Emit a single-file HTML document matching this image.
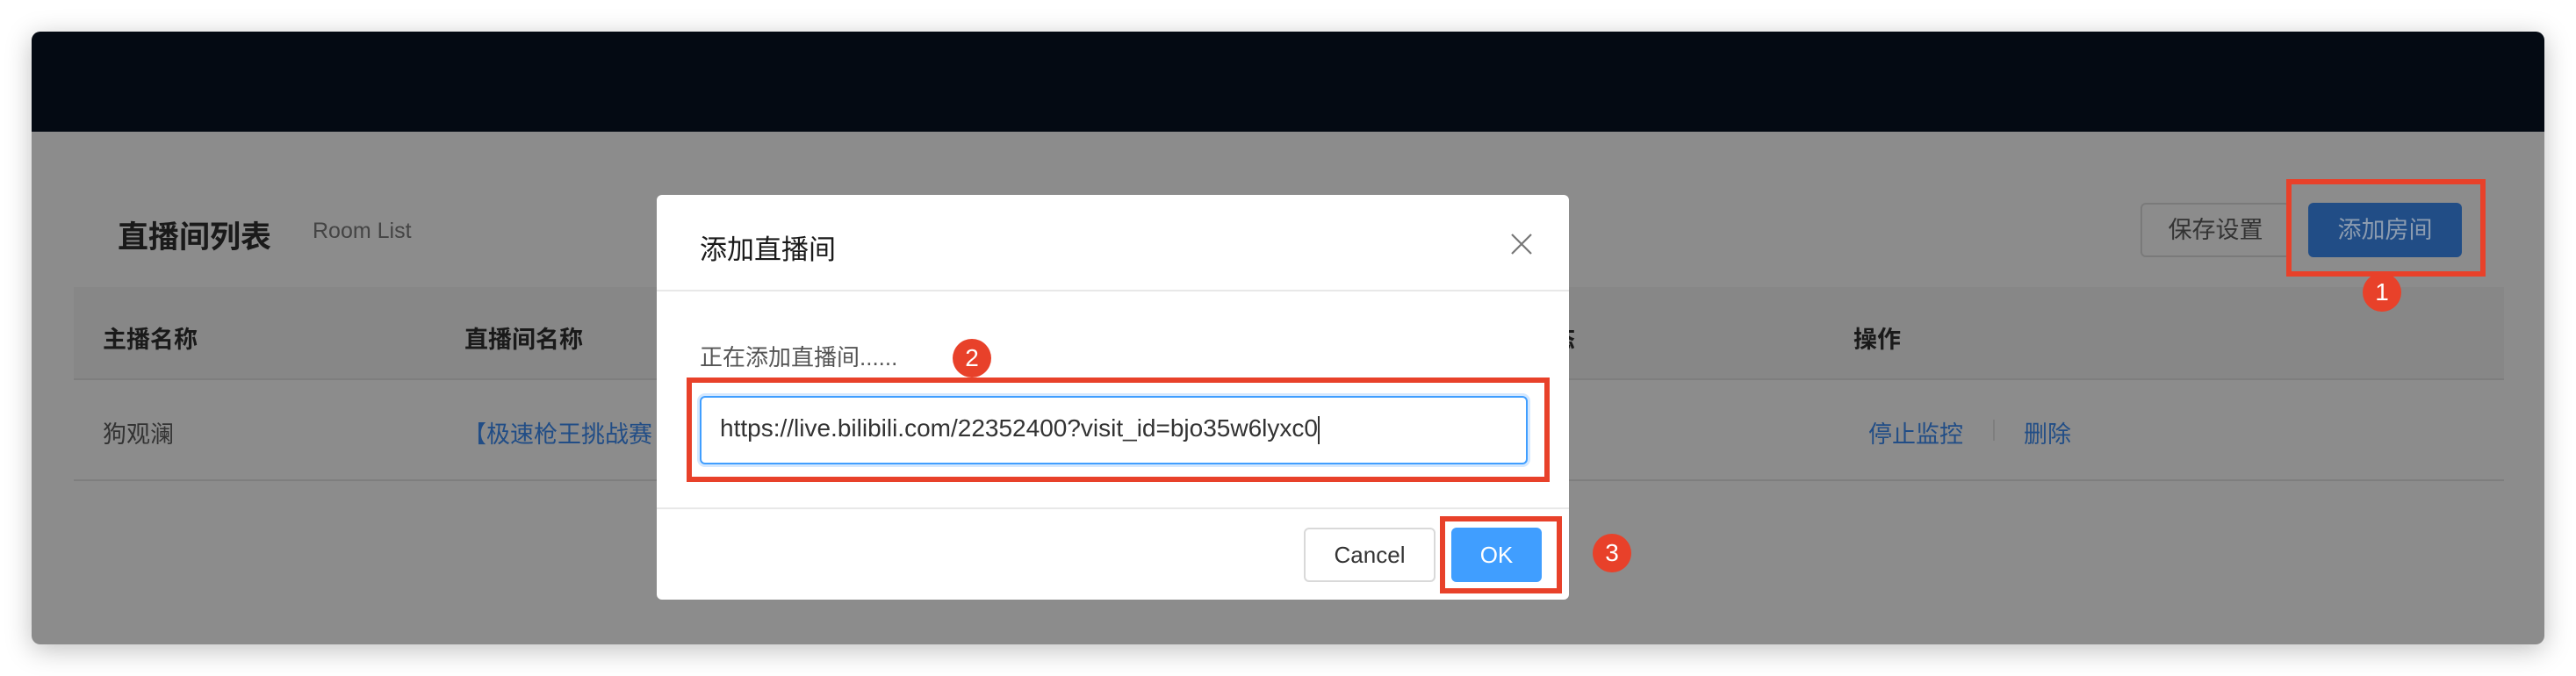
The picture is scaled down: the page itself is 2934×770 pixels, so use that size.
<!DOCTYPE html>
<html><head><meta charset="utf-8"><style>
*{margin:0;padding:0;box-sizing:border-box}
body{width:2934px;height:770px;background:#fff;position:relative;overflow:hidden;font-family:"Liberation Sans","Noto Sans CJK SC",sans-serif}
.a{position:absolute;white-space:nowrap}
.win{left:36px;top:36px;width:2862px;height:698px;background:#8c8c8c;border-radius:10px;overflow:hidden;box-shadow:0 6px 30px rgba(0,0,0,.25)}
.hdr{left:0;top:0;width:100%;height:114px;background:#040a13}
.red{border:6px solid #e8412a}
.badge{width:44px;height:44px;border-radius:50%;background:#e8412a;color:#fff;font-size:28px;line-height:44px;text-align:center}
</style></head><body>
<div class="a win">
  <div class="a hdr"></div>
</div>
<div class="a" style="left:134px;top:242px;font-size:35px;font-weight:bold;color:#1a1a1a">直播间列表</div>
<div class="a" style="left:356px;top:249px;font-size:25px;color:#444">Room List</div>
<div class="a" style="left:84px;top:327px;width:2768px;height:106px;background:#878787;border-bottom:2px solid #7e7e7e"></div>
<div class="a" style="left:84px;top:546px;width:2768px;height:2px;background:#7e7e7e"></div>
<div class="a" style="left:117px;top:365px;font-size:27px;font-weight:bold;color:#1a1a1a">主播名称</div>
<div class="a" style="left:529px;top:365px;font-size:27px;font-weight:bold;color:#1a1a1a">直播间名称</div>
<div class="a" style="left:1740px;top:365px;font-size:27px;font-weight:bold;color:#1a1a1a">状态</div>
<div class="a" style="left:2111px;top:365px;font-size:27px;font-weight:bold;color:#1a1a1a">操作</div>
<div class="a" style="left:117px;top:473px;font-size:27px;color:#333">狗观澜</div>
<div class="a" style="left:527px;top:473px;font-size:27px;color:#214d86">【极速枪王挑战赛</div>
<div class="a" style="left:2128px;top:473px;font-size:27px;color:#214d86">停止监控</div>
<div class="a" style="left:2270px;top:478px;width:2px;height:24px;background:#7e7e7e"></div>
<div class="a" style="left:2305px;top:473px;font-size:27px;color:#214d86">删除</div>
<div class="a" style="left:2438px;top:231px;width:171px;height:62px;border:2px solid #7a7a7a;border-radius:6px;font-size:27px;color:#333;text-align:center;line-height:58px">保存设置</div>
<div class="a" style="left:2629px;top:231px;width:175px;height:62px;background:#214d86;border-radius:6px;font-size:27px;color:#8c9cb0;text-align:center;line-height:62px">添加房间</div>
<div class="a red" style="left:2604px;top:204px;width:227px;height:111px"></div>
<div class="a badge" style="left:2691px;top:311px">1</div>

<div class="a" style="left:748px;top:222px;width:1039px;height:461px;background:#fff;border-radius:6px">
  <div class="a" style="left:49px;top:37px;font-size:31px;color:#1a1a1a">添加直播间</div>
  <svg class="a" style="left:972px;top:43px" width="26" height="26" viewBox="0 0 26 26"><path d="M2 2L24 24M24 2L2 24" stroke="#777" stroke-width="2.2"/></svg>
  <div class="a" style="left:0;top:108px;width:100%;height:2px;background:#e8e8e8"></div>
  <div class="a" style="left:49px;top:165px;font-size:26px;color:#555">正在添加直播间......</div>
  <div class="a" style="left:49px;top:229px;width:943px;height:78px;border:2px solid #409eff;border-radius:6px;box-shadow:0 0 0 3px #d4e8ff"></div>
  <div class="a" style="left:72px;top:250px;font-size:28px;color:#333">https://live.bilibili.com/22352400?visit_id=bjo35w6lyxc0<span style="display:inline-block;width:2px;height:32px;background:#333;vertical-align:middle"></span></div>
  <div class="a" style="left:0;top:356px;width:100%;height:2px;background:#e8e8e8"></div>
  <div class="a" style="left:737px;top:379px;width:150px;height:62px;border:2px solid #d9d9d9;border-radius:6px;font-size:26px;color:#333;text-align:center;line-height:58px">Cancel</div>
  <div class="a" style="left:905px;top:379px;width:103px;height:62px;background:#409eff;border-radius:6px;font-size:26px;color:#fff;text-align:center;line-height:62px">OK</div>
</div>
<div class="a red" style="left:782px;top:430px;width:983px;height:119px"></div>
<div class="a badge" style="left:1085px;top:386px">2</div>
<div class="a red" style="left:1640px;top:588px;width:139px;height:88px"></div>
<div class="a badge" style="left:1814px;top:608px">3</div>
</body></html>
